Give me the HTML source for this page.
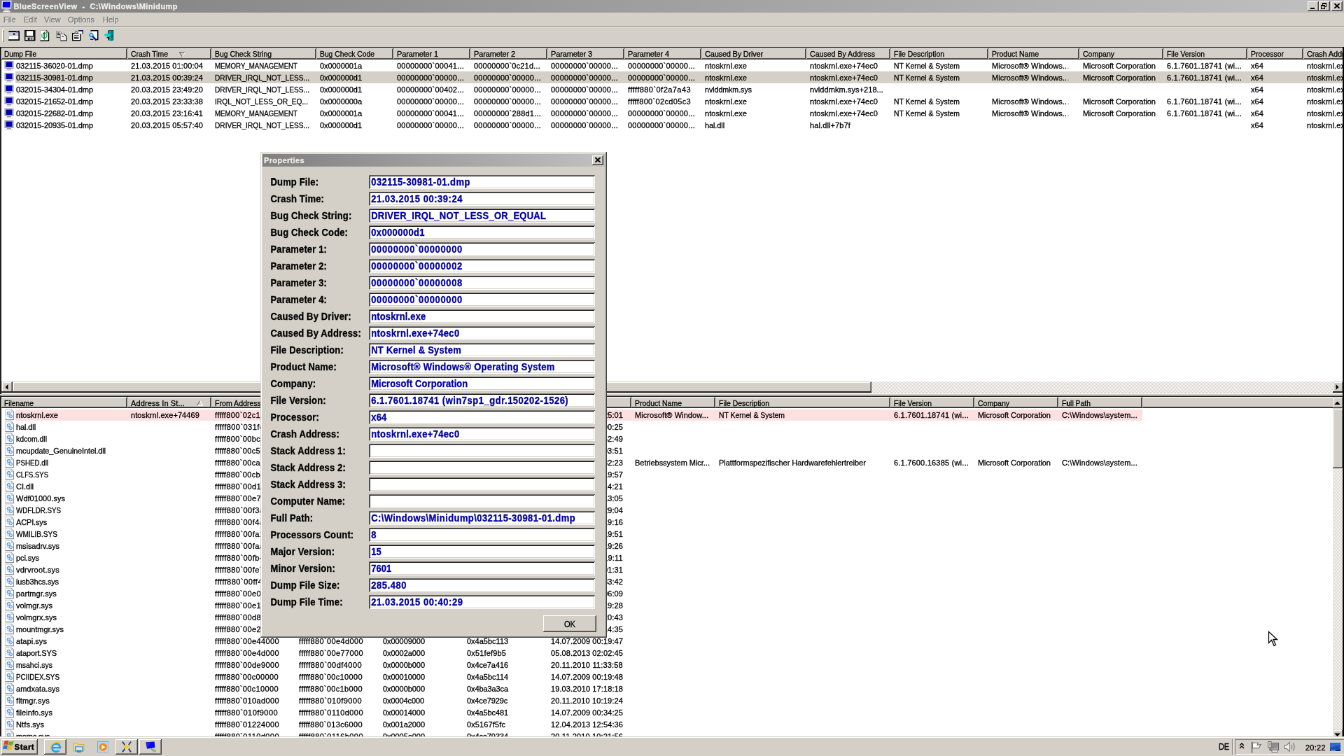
<!DOCTYPE html>
<html><head><meta charset="utf-8"><title>BlueScreenView</title>
<style>
html,body{margin:0;padding:0;background:#d4d0c8;overflow:hidden;width:1344px;height:756px}
#s{will-change:transform;position:absolute;left:0;top:0;width:1920px;height:1080px;transform:scale(.7);transform-origin:0 0;
 font-family:"Liberation Sans",sans-serif;font-size:11px;color:#000;background:#d4d0c8;overflow:hidden;line-height:13px;white-space:nowrap;-webkit-text-stroke:.3px}
#s div,#s span,#s svg{position:absolute;box-sizing:border-box}
.raised{box-shadow:inset -1px -1px #404040,inset 1px 1px #fff,inset -2px -2px #808080,inset 2px 2px #d4d0c8;background:#d4d0c8}
.raised2{box-shadow:inset -1px -1px #404040,inset 1px 1px #d4d0c8,inset -2px -2px #808080,inset 2px 2px #fff;background:#d4d0c8}
.sunken{box-shadow:inset 1px 1px #707070,inset -1px -1px #fff,inset 2px 2px #202020,inset -2px -2px #d4d0c8}
.lv{background:#fff;overflow:hidden}
.hd{background:#d4d0c8;height:16px;top:0;box-shadow:inset -1px -1px #282828,inset 1px 1px #fff,inset -2px -2px #585858;overflow:hidden}
.hd span{left:5px;top:1.8px}
.lo .hd span{top:2.8px}
.hd.f span{left:3.5px}
.row{left:0;height:17px;width:1916px}
.c{top:3px;height:14px}
.sb{background:repeating-conic-gradient(#fff 0 25%,#d4d0c8 0 50%) 0 0/2px 2px}
.btn{background:#d4d0c8;box-shadow:inset -1px -1px #404040,inset 1px 1px #fff,inset -2px -2px #808080}
.lab{left:14.5px;font-weight:bold;font-size:13px;letter-spacing:.15px;line-height:15px;transform:scaleY(1.1);transform-origin:0 35%}
.ed{left:155.4px;width:322.6px;height:20px;background:#fff;box-shadow:inset 1px 1px #707070,inset -1px -1px #fff,inset 2px 2px #181818,inset -2px -2px #d4d0c8}
.ed span{left:2.8px;top:2px;font-weight:bold;font-size:13px;line-height:15px;color:#0000a0;letter-spacing:.4px;transform:scaleY(1.1);transform-origin:0 35%}
</style></head>
<body>
<div id="s">
<div style="left:0;top:0;width:1920px;height:18px;background:linear-gradient(90deg,#808080,#c0c0c0)"></div>
<svg style="left:1px;top:0" width="17" height="18" viewBox="0 0 17 18"><path d="M1.5 1.2L15.6 .8L14.8 12.6L1 12.2Z" fill="#f0f0ff" stroke="#a8a8d0" stroke-width=".8"/><path d="M3 2.8L14 2.4L13.4 10.8L2.6 10.6Z" fill="#0000e0"/><path d="M5 13H12L11 15.5H6Z" fill="#b8bcc8"/><rect x="3.5" y="15.3" width="10" height="2.2" fill="#e8e8ec"/></svg>
<div style="left:19.5px;top:3px;font-weight:bold;color:#f0eee8;letter-spacing:.4px">BlueScreenView&nbsp; -&nbsp; C:\Windows\Minidump</div>
<div class="btn" style="left:1868px;top:2px;width:16px;height:14px"></div>
<div style="left:1872px;top:11px;width:6px;height:2px;background:#000"></div>
<div class="btn" style="left:1884px;top:2px;width:16px;height:14px"></div>
<div style="left:1889px;top:4px;width:6px;height:6px;border:1px solid #000;border-top-width:2px"></div>
<div style="left:1887px;top:7px;width:6px;height:6px;border:1px solid #000;border-top-width:2px;background:#d4d0c8"></div>
<div class="btn" style="left:1902px;top:2px;width:16px;height:14px"></div>
<svg style="left:1906px;top:5px" width="8" height="7" viewBox="0 0 8 7"><path d="M0 0L7 7M1 0L8 7M7 0L0 7M8 0L1 7" stroke="#000" stroke-width="1.25"/></svg>
<div style="left:5px;top:22px;color:#7c7c7c;text-shadow:1px 1px 0 rgba(255,255,255,.55)">File</div>
<div style="left:34px;top:22px;color:#7c7c7c;text-shadow:1px 1px 0 rgba(255,255,255,.55)">Edit</div>
<div style="left:63px;top:22px;color:#7c7c7c;text-shadow:1px 1px 0 rgba(255,255,255,.55)">View</div>
<div style="left:97px;top:22px;color:#7c7c7c;text-shadow:1px 1px 0 rgba(255,255,255,.55)">Options</div>
<div style="left:147px;top:22px;color:#7c7c7c;text-shadow:1px 1px 0 rgba(255,255,255,.55)">Help</div>
<div style="left:0;top:37px;width:1920px;height:1px;background:#808080"></div>
<div style="left:0;top:38px;width:1920px;height:1px;background:#fff"></div>
<div style="left:3px;top:41.5px;width:3px;height:18.5px;box-shadow:inset 1px 1px #fff,inset -1px -1px #808080"></div>
<svg style="left:11.5px;top:43px" width="16" height="16" viewBox="0 0 16 16"><rect x="0" y="1" width="15.5" height="13.5" fill="#fff"/><rect x="0" y="1" width="15" height="2.2" fill="#000078"/><rect x="1" y="3.2" width="13.5" height="5.3" fill="#c4c4cc"/><rect x="7" y="4.6" width="2.2" height="2.2" fill="#000"/><rect x="11" y="2.2" width="3" height="1.6" fill="#7080c8"/><path d="M0 1V14" stroke="#9a9a9a" stroke-width="1"/><path d="M15.2 1.5V15M0 14.2H16" stroke="#000" stroke-width="1.7"/></svg>
<svg style="left:34.5px;top:43px" width="16" height="16" viewBox="0 0 16 16"><rect x="0" y="0" width="15.5" height="15.5" fill="#000"/><rect x="3" y="1.2" width="9" height="7" fill="#fff"/><rect x="1.4" y="1.2" width="1.2" height="12.5" fill="#505050"/><rect x="12.6" y="1.2" width="1.4" height="12.5" fill="#505050"/><rect x="3" y="9.5" width="10" height="4.6" fill="#b0b0b0"/><rect x="5" y="10.6" width="2.4" height="3.5" fill="#202020"/><rect x="9" y="10.6" width="2" height="3.5" fill="#707070"/><rect x="1.5" y="10" width="1.5" height="4" fill="#e8e8e8"/></svg>
<svg style="left:57px;top:43px" width="16" height="16" viewBox="0 0 16 16"><path d="M.5 .5H9L12.5 4V15.3H.5Z" fill="#fff"/><path d="M.5 15V.5H9" fill="none" stroke="#b8b8b8"/><path d="M9 .5L12.5 4V15.2H.5" fill="none" stroke="#000" stroke-width="1.4"/><path d="M9 .5V4H12.5" fill="#d8d8d8" stroke="#404040" stroke-width=".8"/><path d="M6.3 2.2L3.6 6H5.4V9.2H7.2V6H9Z" fill="#008018"/><path d="M6.3 14L9 10.2H7.2V7H5.4V10.2H3.6Z" fill="#009828"/><path d="M3.2 5.5Q2 8 3.4 10.6M9.4 5.5Q10.6 8 9.2 10.6" stroke="#30a0a0" stroke-width="1.3" fill="none"/></svg>
<svg style="left:80px;top:43px" width="16" height="16" viewBox="0 0 16 16"><path d="M.5 1.5H5.5L8 4V10.5H.5Z" fill="#d8d8d8" stroke="#8a8a8a"/><path d="M8 4.5V10.5H1" stroke="#484848" stroke-width="1.3" fill="none"/><path d="M2 4.2H5M2 6.5H6" stroke="#282828" stroke-width="1.6"/><path d="M6.5 5.5H11.5L15 9V15.2H6.5Z" fill="#ececec" stroke="#909090"/><path d="M11.5 5.5L15 9V15.2H6.5" stroke="#404040" stroke-width="1.4" fill="none"/><path d="M8.5 9.3H11" stroke="#505050" stroke-width="1.4"/></svg>
<svg style="left:103px;top:43px" width="16" height="16" viewBox="0 0 16 16"><rect x=".7" y="4.7" width="11" height="10" fill="#fff" stroke="#000" stroke-width="1.4"/><path d="M3 8H9.5" stroke="#000" stroke-width="1.2"/><path d="M3 11.2H9.5" stroke="#000" stroke-width="2"/><path d="M5.5 9.6H9.5" stroke="#fff" stroke-width="1.2"/><rect x="9" y=".8" width="6.4" height="4.4" fill="#fff"/><path d="M9 .9H15.4V5.4" stroke="#101080" stroke-width="1.6" fill="none"/><path d="M3.5 4.5L6 1.4L8.5 4.2" stroke="#707070" stroke-width="1.3" fill="#e0e0e0"/></svg>
<svg style="left:127px;top:43px" width="16" height="16" viewBox="0 0 16 16"><path d="M2.5 .7H12.5V13.5H4V.7Z" fill="#fff"/><path d="M2.5 .7H12.7V13.4H9" fill="none" stroke="#000" stroke-width="1.5"/><path d="M2 13.2H6.5" stroke="#000" stroke-width="1.3"/><circle cx="3.4" cy="7" r="2.6" fill="#50d8f0" stroke="#2888d8" stroke-width="1.3"/><circle cx="3.2" cy="6.6" r=".9" fill="#d8f8ff"/><path d="M5.4 9.2L10.6 14.4" stroke="#001890" stroke-width="2.4"/></svg>
<svg style="left:149px;top:43px" width="16" height="16" viewBox="0 0 16 16"><path d="M6.2 .4H13.2V14.6L9.6 15.6L6.2 14.4Z" fill="#00a8a8"/><path d="M9.8 .4H13.2V14.6L9.8 15.6Z" fill="#007c80"/><path d="M6.2 .5V5M6.2 10V14.4" stroke="#000" stroke-width="1.3"/><path d="M3.6 10.5H6.4V12.6" stroke="#000" stroke-width="1.5" fill="none"/><circle cx="11" cy="8.2" r=".9" fill="#000"/><path d="M.2 5.2H4.6V3L8.8 7L4.6 10.6V8.6H.2Z" fill="#08d4dc"/><path d="M6 .5H13.4" stroke="#003c40" stroke-width=".8"/></svg>
<div class="lv" style="left:0;top:67px;width:1920px;height:496px">
<div class="hd f" style="left:2px;top:2px;width:180px"><span style="transform:scaleX(0.918);transform-origin:0 0;">Dump File</span></div>
<div class="hd" style="left:182px;top:2px;width:120px"><span style="transform:scaleX(0.942);transform-origin:0 0;">Crash Time</span></div>
<div class="hd" style="left:302px;top:2px;width:150px"><span style="transform:scaleX(0.946);transform-origin:0 0;">Bug Check String</span></div>
<div class="hd" style="left:452px;top:2px;width:110px"><span style="transform:scaleX(0.938);transform-origin:0 0;">Bug Check Code</span></div>
<div class="hd" style="left:562px;top:2px;width:110px"><span style="letter-spacing:-0.14px;">Parameter 1</span></div>
<div class="hd" style="left:672px;top:2px;width:110px"><span style="letter-spacing:-0.14px;">Parameter 2</span></div>
<div class="hd" style="left:782px;top:2px;width:110px"><span style="letter-spacing:-0.14px;">Parameter 3</span></div>
<div class="hd" style="left:892px;top:2px;width:110px"><span style="letter-spacing:-0.14px;">Parameter 4</span></div>
<div class="hd" style="left:1002px;top:2px;width:150px"><span style="letter-spacing:-0.2px;">Caused By Driver</span></div>
<div class="hd" style="left:1152px;top:2px;width:120px"><span style="transform:scaleX(0.962);transform-origin:0 0;">Caused By Address</span></div>
<div class="hd" style="left:1272px;top:2px;width:140px"><span style="transform:scaleX(0.950);transform-origin:0 0;">File Description</span></div>
<div class="hd" style="left:1412px;top:2px;width:130px"><span style="transform:scaleX(0.953);transform-origin:0 0;">Product Name</span></div>
<div class="hd" style="left:1542px;top:2px;width:120px"><span style="transform:scaleX(0.956);transform-origin:0 0;">Company</span></div>
<div class="hd" style="left:1662px;top:2px;width:120px"><span style="transform:scaleX(0.939);transform-origin:0 0;">File Version</span></div>
<div class="hd" style="left:1782px;top:2px;width:80px"><span style="transform:scaleX(0.949);transform-origin:0 0;">Processor</span></div>
<div class="hd" style="left:1862px;top:2px;width:120px"><span style="letter-spacing:-0.17px;">Crash Address</span></div>
<svg style="left:256px;top:7px" width="9" height="8" viewBox="0 0 9 8"><path d="M.5 .5H8.5L4.5 7.5Z" fill="none" stroke="#707070" stroke-width="1.3"/><path d="M8.5 .5L4.5 7.5" stroke="#fff" stroke-width="1.3" fill="none"/></svg>
<div class="row" style="top:18px">
<svg style="left:4px;top:1px" width="16" height="16" viewBox="0 0 16 16"><rect x="3" y="1.5" width="12" height="10" fill="#c8c8d8" stroke="#9090a8"/><rect x="4.5" y="2.5" width="9" height="7.5" fill="#0000b4"/><rect x="6" y="12" width="6" height="1.5" fill="#a0a0a0"/><rect x="4" y="13.5" width="10" height="1.5" fill="#d8d8d8"/></svg>
<span class="c" style="left:23px;letter-spacing:-0.03px;">032115-36020-01.dmp</span>
<span class="c" style="left:187px;letter-spacing:0.11px;">21.03.2015 01:00:04</span>
<span class="c" style="left:307px;transform:scaleX(0.879);transform-origin:0 0;">MEMORY_MANAGEMENT</span>
<span class="c" style="left:457px;letter-spacing:-0.06px;">0x0000001a</span>
<span class="c" style="left:567px;letter-spacing:0.21px;">00000000`00041...</span>
<span class="c" style="left:677px;letter-spacing:0.19px;">00000000`0c21d...</span>
<span class="c" style="left:787px;letter-spacing:0.21px;">00000000`00000...</span>
<span class="c" style="left:897px;letter-spacing:0.21px;">00000000`00000...</span>
<span class="c" style="left:1007px;letter-spacing:0.06px;">ntoskrnl.exe</span>
<span class="c" style="left:1157px;letter-spacing:0.07px;">ntoskrnl.exe+74ec0</span>
<span class="c" style="left:1277px;transform:scaleX(0.945);transform-origin:0 0;">NT Kernel &amp; System</span>
<span class="c" style="left:1417px;letter-spacing:0.02px;">Microsoft® Windows...</span>
<span class="c" style="left:1547px;letter-spacing:-0.06px;">Microsoft Corporation</span>
<span class="c" style="left:1667px;letter-spacing:0.2px;">6.1.7601.18741 (wi...</span>
<span class="c" style="left:1787px;letter-spacing:0.08px;">x64</span>
<span class="c" style="left:1867px;letter-spacing:0.07px;">ntoskrnl.exe+74ec0</span>
</div>
<div class="row" style="top:35px">
<div style="left:22px;top:0;width:1900px;height:17px;background:#d4d0c8"></div>
<svg style="left:4px;top:1px" width="16" height="16" viewBox="0 0 16 16"><rect x="3" y="1.5" width="12" height="10" fill="#c8c8d8" stroke="#9090a8"/><rect x="4.5" y="2.5" width="9" height="7.5" fill="#0000b4"/><rect x="6" y="12" width="6" height="1.5" fill="#a0a0a0"/><rect x="4" y="13.5" width="10" height="1.5" fill="#d8d8d8"/></svg>
<span class="c" style="left:23px;letter-spacing:-0.03px;">032115-30981-01.dmp</span>
<span class="c" style="left:187px;letter-spacing:0.11px;">21.03.2015 00:39:24</span>
<span class="c" style="left:307px;transform:scaleX(0.924);transform-origin:0 0;">DRIVER_IRQL_NOT_LESS...</span>
<span class="c" style="left:457px;letter-spacing:-0.06px;">0x000000d1</span>
<span class="c" style="left:567px;letter-spacing:0.21px;">00000000`00000...</span>
<span class="c" style="left:677px;letter-spacing:0.21px;">00000000`00000...</span>
<span class="c" style="left:787px;letter-spacing:0.21px;">00000000`00000...</span>
<span class="c" style="left:897px;letter-spacing:0.21px;">00000000`00000...</span>
<span class="c" style="left:1007px;letter-spacing:0.06px;">ntoskrnl.exe</span>
<span class="c" style="left:1157px;letter-spacing:0.07px;">ntoskrnl.exe+74ec0</span>
<span class="c" style="left:1277px;transform:scaleX(0.945);transform-origin:0 0;">NT Kernel &amp; System</span>
<span class="c" style="left:1417px;letter-spacing:0.02px;">Microsoft® Windows...</span>
<span class="c" style="left:1547px;letter-spacing:-0.06px;">Microsoft Corporation</span>
<span class="c" style="left:1667px;letter-spacing:0.2px;">6.1.7601.18741 (wi...</span>
<span class="c" style="left:1787px;letter-spacing:0.08px;">x64</span>
<span class="c" style="left:1867px;letter-spacing:0.07px;">ntoskrnl.exe+74ec0</span>
</div>
<div class="row" style="top:52px">
<svg style="left:4px;top:1px" width="16" height="16" viewBox="0 0 16 16"><rect x="3" y="1.5" width="12" height="10" fill="#c8c8d8" stroke="#9090a8"/><rect x="4.5" y="2.5" width="9" height="7.5" fill="#0000b4"/><rect x="6" y="12" width="6" height="1.5" fill="#a0a0a0"/><rect x="4" y="13.5" width="10" height="1.5" fill="#d8d8d8"/></svg>
<span class="c" style="left:23px;letter-spacing:-0.07px;">032015-34304-01.dmp</span>
<span class="c" style="left:187px;letter-spacing:0.11px;">20.03.2015 23:49:20</span>
<span class="c" style="left:307px;transform:scaleX(0.924);transform-origin:0 0;">DRIVER_IRQL_NOT_LESS...</span>
<span class="c" style="left:457px;letter-spacing:-0.06px;">0x000000d1</span>
<span class="c" style="left:567px;letter-spacing:0.21px;">00000000`00402...</span>
<span class="c" style="left:677px;letter-spacing:0.21px;">00000000`00000...</span>
<span class="c" style="left:787px;letter-spacing:0.21px;">00000000`00000...</span>
<span class="c" style="left:897px;letter-spacing:0.45px;">fffff880`0f2a7a43</span>
<span class="c" style="left:1007px;transform:scaleX(0.961);transform-origin:0 0;">nvlddmkm.sys</span>
<span class="c" style="left:1157px;letter-spacing:0.07px;">nvlddmkm.sys+218...</span>
<span class="c" style="left:1787px;letter-spacing:0.08px;">x64</span>
<span class="c" style="left:1867px;letter-spacing:0.07px;">ntoskrnl.exe+74ec0</span>
</div>
<div class="row" style="top:69px">
<svg style="left:4px;top:1px" width="16" height="16" viewBox="0 0 16 16"><rect x="3" y="1.5" width="12" height="10" fill="#c8c8d8" stroke="#9090a8"/><rect x="4.5" y="2.5" width="9" height="7.5" fill="#0000b4"/><rect x="6" y="12" width="6" height="1.5" fill="#a0a0a0"/><rect x="4" y="13.5" width="10" height="1.5" fill="#d8d8d8"/></svg>
<span class="c" style="left:23px;letter-spacing:-0.07px;">032015-21652-01.dmp</span>
<span class="c" style="left:187px;letter-spacing:0.11px;">20.03.2015 23:33:38</span>
<span class="c" style="left:307px;transform:scaleX(0.930);transform-origin:0 0;">IRQL_NOT_LESS_OR_EQ...</span>
<span class="c" style="left:457px;letter-spacing:-0.06px;">0x0000000a</span>
<span class="c" style="left:567px;letter-spacing:0.21px;">00000000`00000...</span>
<span class="c" style="left:677px;letter-spacing:0.21px;">00000000`00000...</span>
<span class="c" style="left:787px;letter-spacing:0.21px;">00000000`00000...</span>
<span class="c" style="left:897px;letter-spacing:0.34px;">fffff800`02cd05c3</span>
<span class="c" style="left:1007px;letter-spacing:0.06px;">ntoskrnl.exe</span>
<span class="c" style="left:1157px;letter-spacing:0.07px;">ntoskrnl.exe+74ec0</span>
<span class="c" style="left:1277px;transform:scaleX(0.945);transform-origin:0 0;">NT Kernel &amp; System</span>
<span class="c" style="left:1417px;letter-spacing:0.02px;">Microsoft® Windows...</span>
<span class="c" style="left:1547px;letter-spacing:-0.06px;">Microsoft Corporation</span>
<span class="c" style="left:1667px;letter-spacing:0.2px;">6.1.7601.18741 (wi...</span>
<span class="c" style="left:1787px;letter-spacing:0.08px;">x64</span>
<span class="c" style="left:1867px;letter-spacing:0.07px;">ntoskrnl.exe+74ec0</span>
</div>
<div class="row" style="top:86px">
<svg style="left:4px;top:1px" width="16" height="16" viewBox="0 0 16 16"><rect x="3" y="1.5" width="12" height="10" fill="#c8c8d8" stroke="#9090a8"/><rect x="4.5" y="2.5" width="9" height="7.5" fill="#0000b4"/><rect x="6" y="12" width="6" height="1.5" fill="#a0a0a0"/><rect x="4" y="13.5" width="10" height="1.5" fill="#d8d8d8"/></svg>
<span class="c" style="left:23px;letter-spacing:-0.07px;">032015-22682-01.dmp</span>
<span class="c" style="left:187px;letter-spacing:0.11px;">20.03.2015 23:16:41</span>
<span class="c" style="left:307px;transform:scaleX(0.879);transform-origin:0 0;">MEMORY_MANAGEMENT</span>
<span class="c" style="left:457px;letter-spacing:-0.06px;">0x0000001a</span>
<span class="c" style="left:567px;letter-spacing:0.21px;">00000000`00041...</span>
<span class="c" style="left:677px;letter-spacing:0.21px;">00000000`288d1...</span>
<span class="c" style="left:787px;letter-spacing:0.21px;">00000000`00000...</span>
<span class="c" style="left:897px;letter-spacing:0.21px;">00000000`00000...</span>
<span class="c" style="left:1007px;letter-spacing:0.06px;">ntoskrnl.exe</span>
<span class="c" style="left:1157px;letter-spacing:0.07px;">ntoskrnl.exe+74ec0</span>
<span class="c" style="left:1277px;transform:scaleX(0.945);transform-origin:0 0;">NT Kernel &amp; System</span>
<span class="c" style="left:1417px;letter-spacing:0.02px;">Microsoft® Windows...</span>
<span class="c" style="left:1547px;letter-spacing:-0.06px;">Microsoft Corporation</span>
<span class="c" style="left:1667px;letter-spacing:0.2px;">6.1.7601.18741 (wi...</span>
<span class="c" style="left:1787px;letter-spacing:0.08px;">x64</span>
<span class="c" style="left:1867px;letter-spacing:0.07px;">ntoskrnl.exe+74ec0</span>
</div>
<div class="row" style="top:103px">
<svg style="left:4px;top:1px" width="16" height="16" viewBox="0 0 16 16"><rect x="3" y="1.5" width="12" height="10" fill="#c8c8d8" stroke="#9090a8"/><rect x="4.5" y="2.5" width="9" height="7.5" fill="#0000b4"/><rect x="6" y="12" width="6" height="1.5" fill="#a0a0a0"/><rect x="4" y="13.5" width="10" height="1.5" fill="#d8d8d8"/></svg>
<span class="c" style="left:23px;letter-spacing:-0.07px;">032015-20935-01.dmp</span>
<span class="c" style="left:187px;letter-spacing:0.11px;">20.03.2015 05:57:40</span>
<span class="c" style="left:307px;transform:scaleX(0.924);transform-origin:0 0;">DRIVER_IRQL_NOT_LESS...</span>
<span class="c" style="left:457px;letter-spacing:-0.06px;">0x000000d1</span>
<span class="c" style="left:567px;letter-spacing:0.21px;">00000000`00000...</span>
<span class="c" style="left:677px;letter-spacing:0.21px;">00000000`00000...</span>
<span class="c" style="left:787px;letter-spacing:0.21px;">00000000`00000...</span>
<span class="c" style="left:897px;letter-spacing:0.21px;">00000000`00000...</span>
<span class="c" style="left:1007px;letter-spacing:-0.11px;">hal.dll</span>
<span class="c" style="left:1157px;letter-spacing:0.12px;">hal.dll+7b7f</span>
<span class="c" style="left:1787px;letter-spacing:0.08px;">x64</span>
<span class="c" style="left:1867px;letter-spacing:0.07px;">ntoskrnl.exe+74ec0</span>
</div>
<div class="sb" style="left:2px;top:478px;width:1916px;height:16px"></div>
<div class="raised2" style="left:2px;top:478px;width:16px;height:16px"></div>
<svg style="left:7px;top:482px" width="5" height="8" viewBox="0 0 5 8"><path d="M4.5 0V8L.5 4Z" fill="#000"/></svg>
<div class="raised2" style="left:18px;top:478px;width:1227px;height:16px"></div>
<div class="raised2" style="left:1904.2px;top:478px;width:14.5px;height:16px"></div>
<svg style="left:1908px;top:482px" width="5" height="8" viewBox="0 0 5 8"><path d="M.5 0V8L4.5 4Z" fill="#000"/></svg>
<div style="left:2px;top:492.3px;width:1243px;height:2px;background:#282828"></div>
<div style="left:1904.2px;top:492.3px;width:14.5px;height:2px;background:#282828"></div>
<div class="sunken" style="left:0;top:0;width:1920px;height:496px;pointer-events:none"></div>
<div style="left:0;top:0;width:1.6px;height:496px;background:#202020"></div>
</div>
<div class="lv lo" style="left:0;top:565px;width:1920px;height:515px">
<div class="hd f" style="left:2px;top:2px;width:180px"><span style="transform:scaleX(0.928);transform-origin:0 0;">Filename</span></div>
<div class="hd" style="left:182px;top:2px;width:120px"><span style="letter-spacing:0.11px;">Address In St...</span></div>
<div class="hd" style="left:302px;top:2px;width:120px"><span style="transform:scaleX(0.964);transform-origin:0 0;">From Address</span></div>
<div class="hd" style="left:422px;top:2px;width:120px"><span style="letter-spacing:-0.04px;">To Address</span></div>
<div class="hd" style="left:542px;top:2px;width:120px"><span style="transform:scaleX(0.888);transform-origin:0 0;">Size</span></div>
<div class="hd" style="left:662px;top:2px;width:120px"><span style="transform:scaleX(0.934);transform-origin:0 0;">Time Stamp</span></div>
<div class="hd" style="left:782px;top:2px;width:120px"><span style="transform:scaleX(0.949);transform-origin:0 0;">Time String</span></div>
<div class="hd" style="left:902px;top:2px;width:120px"><span style="transform:scaleX(0.953);transform-origin:0 0;">Product Name</span></div>
<div class="hd" style="left:1022px;top:2px;width:250px"><span style="transform:scaleX(0.950);transform-origin:0 0;">File Description</span></div>
<div class="hd" style="left:1272px;top:2px;width:120px"><span style="transform:scaleX(0.939);transform-origin:0 0;">File Version</span></div>
<div class="hd" style="left:1392px;top:2px;width:120px"><span style="transform:scaleX(0.956);transform-origin:0 0;">Company</span></div>
<div class="hd" style="left:1512px;top:2px;width:120px"><span style="transform:scaleX(0.944);transform-origin:0 0;">Full Path</span></div>
<div class="hd" style="left:1632px;top:2px;width:290px"></div>
<svg style="left:281px;top:7px" width="9" height="8" viewBox="0 0 9 8"><path d="M.5 7.5H8.5L4.5 .5Z" fill="none" stroke="#fff" stroke-width="1.3"/><path d="M.5 7.5L4.5 .5" stroke="#707070" stroke-width="1.3" fill="none"/></svg>
<div class="row" style="top:19px">
<div style="left:22px;top:1.4px;width:1610px;height:15.4px;background:#ffe0e0"></div>
<svg style="left:4px;top:0" width="16" height="17" viewBox="0 0 16 17"><path d="M3.8 1.2H12L15.4 4.6V15.6H3.8Z" fill="#fff"/><path d="M3.8 15.6V1.2H12" fill="none" stroke="#c0c4cc"/><path d="M12 1.2L15.4 4.6V15.6H3.4" fill="none" stroke="#8c9098" stroke-width="1.2"/><path d="M12 1.4V4.6H15.2" fill="#eceef2" stroke="#a8acb4" stroke-width=".8"/><circle cx="8.4" cy="6.6" r="2.3" fill="#c4dcf4" stroke="#4c84c4" stroke-width="1"/><circle cx="11.4" cy="10.8" r="2.1" fill="#cce0f6" stroke="#5c94d0" stroke-width="1"/><path d="M6.2 9.6L8.6 12.4" stroke="#6c9cd0" stroke-width="1"/></svg>
<span class="c" style="left:23px;letter-spacing:0.06px;">ntoskrnl.exe</span>
<span class="c" style="left:187px;letter-spacing:0.09px;">ntoskrnl.exe+74469</span>
<span class="c" style="left:307px;letter-spacing:0.36px;">fffff800`02c19000</span>
<span class="c" style="left:427px;letter-spacing:0.45px;">fffff800`031fe000</span>
<span class="c" style="left:547px;letter-spacing:-0.06px;">0x005e5000</span>
<span class="c" style="left:667px;letter-spacing:-0.06px;">0x54d0317d</span>
<span class="c" style="left:787px;letter-spacing:0.11px;">03.02.2015 03:25:01</span>
<span class="c" style="left:907px;letter-spacing:0.08px;">Microsoft® Window...</span>
<span class="c" style="left:1027px;transform:scaleX(0.945);transform-origin:0 0;">NT Kernel &amp; System</span>
<span class="c" style="left:1277px;letter-spacing:0.2px;">6.1.7601.18741 (wi...</span>
<span class="c" style="left:1397px;letter-spacing:-0.06px;">Microsoft Corporation</span>
<span class="c" style="left:1517px;letter-spacing:0.11px;">C:\Windows\system...</span>
</div>
<div class="row" style="top:36px">
<svg style="left:4px;top:0" width="16" height="17" viewBox="0 0 16 17"><path d="M3.8 1.2H12L15.4 4.6V15.6H3.8Z" fill="#fff"/><path d="M3.8 15.6V1.2H12" fill="none" stroke="#c0c4cc"/><path d="M12 1.2L15.4 4.6V15.6H3.4" fill="none" stroke="#8c9098" stroke-width="1.2"/><path d="M12 1.4V4.6H15.2" fill="#eceef2" stroke="#a8acb4" stroke-width=".8"/><circle cx="8.4" cy="6.6" r="2.3" fill="#c4dcf4" stroke="#4c84c4" stroke-width="1"/><circle cx="11.4" cy="10.8" r="2.1" fill="#cce0f6" stroke="#5c94d0" stroke-width="1"/><path d="M6.2 9.6L8.6 12.4" stroke="#6c9cd0" stroke-width="1"/></svg>
<span class="c" style="left:23px;letter-spacing:-0.11px;">hal.dll</span>
<span class="c" style="left:307px;letter-spacing:0.45px;">fffff800`031fe000</span>
<span class="c" style="left:427px;letter-spacing:0.39px;">fffff800`03247000</span>
<span class="c" style="left:547px;letter-spacing:-0.06px;">0x00049000</span>
<span class="c" style="left:667px;letter-spacing:-0.13px;">0x4ce7c669</span>
<span class="c" style="left:787px;letter-spacing:0.15px;">20.11.2010 14:00:25</span>
</div>
<div class="row" style="top:53px">
<svg style="left:4px;top:0" width="16" height="17" viewBox="0 0 16 17"><path d="M3.8 1.2H12L15.4 4.6V15.6H3.8Z" fill="#fff"/><path d="M3.8 15.6V1.2H12" fill="none" stroke="#c0c4cc"/><path d="M12 1.2L15.4 4.6V15.6H3.4" fill="none" stroke="#8c9098" stroke-width="1.2"/><path d="M12 1.4V4.6H15.2" fill="#eceef2" stroke="#a8acb4" stroke-width=".8"/><circle cx="8.4" cy="6.6" r="2.3" fill="#c4dcf4" stroke="#4c84c4" stroke-width="1"/><circle cx="11.4" cy="10.8" r="2.1" fill="#cce0f6" stroke="#5c94d0" stroke-width="1"/><path d="M6.2 9.6L8.6 12.4" stroke="#6c9cd0" stroke-width="1"/></svg>
<span class="c" style="left:23px;transform:scaleX(0.947);transform-origin:0 0;">kdcom.dll</span>
<span class="c" style="left:307px;letter-spacing:0.36px;">fffff800`00bcd000</span>
<span class="c" style="left:427px;letter-spacing:0.39px;">fffff800`00bd7000</span>
<span class="c" style="left:547px;letter-spacing:-0.06px;">0x0000a000</span>
<span class="c" style="left:667px;letter-spacing:-0.06px;">0x4d4d8061</span>
<span class="c" style="left:787px;letter-spacing:0.15px;">05.02.2011 17:52:49</span>
</div>
<div class="row" style="top:70px">
<svg style="left:4px;top:0" width="16" height="17" viewBox="0 0 16 17"><path d="M3.8 1.2H12L15.4 4.6V15.6H3.8Z" fill="#fff"/><path d="M3.8 15.6V1.2H12" fill="none" stroke="#c0c4cc"/><path d="M12 1.2L15.4 4.6V15.6H3.4" fill="none" stroke="#8c9098" stroke-width="1.2"/><path d="M12 1.4V4.6H15.2" fill="#eceef2" stroke="#a8acb4" stroke-width=".8"/><circle cx="8.4" cy="6.6" r="2.3" fill="#c4dcf4" stroke="#4c84c4" stroke-width="1"/><circle cx="11.4" cy="10.8" r="2.1" fill="#cce0f6" stroke="#5c94d0" stroke-width="1"/><path d="M6.2 9.6L8.6 12.4" stroke="#6c9cd0" stroke-width="1"/></svg>
<span class="c" style="left:23px;letter-spacing:-0.12px;">mcupdate_GenuineIntel.dll</span>
<span class="c" style="left:307px;letter-spacing:0.36px;">fffff880`00c57000</span>
<span class="c" style="left:427px;letter-spacing:0.36px;">fffff880`00ca6000</span>
<span class="c" style="left:547px;letter-spacing:0.05px;">0x0004f000</span>
<span class="c" style="left:667px;letter-spacing:-0.13px;">0x4ce7c737</span>
<span class="c" style="left:787px;letter-spacing:0.15px;">20.11.2010 14:03:51</span>
</div>
<div class="row" style="top:87px">
<svg style="left:4px;top:0" width="16" height="17" viewBox="0 0 16 17"><path d="M3.8 1.2H12L15.4 4.6V15.6H3.8Z" fill="#fff"/><path d="M3.8 15.6V1.2H12" fill="none" stroke="#c0c4cc"/><path d="M12 1.2L15.4 4.6V15.6H3.4" fill="none" stroke="#8c9098" stroke-width="1.2"/><path d="M12 1.4V4.6H15.2" fill="#eceef2" stroke="#a8acb4" stroke-width=".8"/><circle cx="8.4" cy="6.6" r="2.3" fill="#c4dcf4" stroke="#4c84c4" stroke-width="1"/><circle cx="11.4" cy="10.8" r="2.1" fill="#cce0f6" stroke="#5c94d0" stroke-width="1"/><path d="M6.2 9.6L8.6 12.4" stroke="#6c9cd0" stroke-width="1"/></svg>
<span class="c" style="left:23px;transform:scaleX(0.885);transform-origin:0 0;">PSHED.dll</span>
<span class="c" style="left:307px;letter-spacing:0.36px;">fffff880`00ca6000</span>
<span class="c" style="left:427px;letter-spacing:0.36px;">fffff880`00cba000</span>
<span class="c" style="left:547px;letter-spacing:-0.06px;">0x00014000</span>
<span class="c" style="left:667px;letter-spacing:-0.06px;">0x4a5be027</span>
<span class="c" style="left:787px;letter-spacing:0.11px;">14.07.2009 02:32:23</span>
<span class="c" style="left:907px;letter-spacing:-0.03px;">Betriebssystem Micr...</span>
<span class="c" style="left:1027px;letter-spacing:-0.04px;">Plattformspezifischer Hardwarefehlertreiber</span>
<span class="c" style="left:1277px;letter-spacing:0.2px;">6.1.7600.16385 (wi...</span>
<span class="c" style="left:1397px;letter-spacing:-0.06px;">Microsoft Corporation</span>
<span class="c" style="left:1517px;letter-spacing:0.11px;">C:\Windows\system...</span>
</div>
<div class="row" style="top:104px">
<svg style="left:4px;top:0" width="16" height="17" viewBox="0 0 16 17"><path d="M3.8 1.2H12L15.4 4.6V15.6H3.8Z" fill="#fff"/><path d="M3.8 15.6V1.2H12" fill="none" stroke="#c0c4cc"/><path d="M12 1.2L15.4 4.6V15.6H3.4" fill="none" stroke="#8c9098" stroke-width="1.2"/><path d="M12 1.4V4.6H15.2" fill="#eceef2" stroke="#a8acb4" stroke-width=".8"/><circle cx="8.4" cy="6.6" r="2.3" fill="#c4dcf4" stroke="#4c84c4" stroke-width="1"/><circle cx="11.4" cy="10.8" r="2.1" fill="#cce0f6" stroke="#5c94d0" stroke-width="1"/><path d="M6.2 9.6L8.6 12.4" stroke="#6c9cd0" stroke-width="1"/></svg>
<span class="c" style="left:23px;transform:scaleX(0.865);transform-origin:0 0;">CLFS.SYS</span>
<span class="c" style="left:307px;letter-spacing:0.36px;">fffff880`00cba000</span>
<span class="c" style="left:427px;letter-spacing:0.39px;">fffff880`00d18000</span>
<span class="c" style="left:547px;letter-spacing:-0.06px;">0x0005e000</span>
<span class="c" style="left:667px;">0x4a5bc11d</span>
<span class="c" style="left:787px;letter-spacing:0.11px;">14.07.2009 00:19:57</span>
</div>
<div class="row" style="top:121px">
<svg style="left:4px;top:0" width="16" height="17" viewBox="0 0 16 17"><path d="M3.8 1.2H12L15.4 4.6V15.6H3.8Z" fill="#fff"/><path d="M3.8 15.6V1.2H12" fill="none" stroke="#c0c4cc"/><path d="M12 1.2L15.4 4.6V15.6H3.4" fill="none" stroke="#8c9098" stroke-width="1.2"/><path d="M12 1.4V4.6H15.2" fill="#eceef2" stroke="#a8acb4" stroke-width=".8"/><circle cx="8.4" cy="6.6" r="2.3" fill="#c4dcf4" stroke="#4c84c4" stroke-width="1"/><circle cx="11.4" cy="10.8" r="2.1" fill="#cce0f6" stroke="#5c94d0" stroke-width="1"/><path d="M6.2 9.6L8.6 12.4" stroke="#6c9cd0" stroke-width="1"/></svg>
<span class="c" style="left:23px;">CI.dll</span>
<span class="c" style="left:307px;letter-spacing:0.39px;">fffff880`00d18000</span>
<span class="c" style="left:427px;letter-spacing:0.39px;">fffff880`00dd8000</span>
<span class="c" style="left:547px;letter-spacing:-0.1px;">0x000c0000</span>
<span class="c" style="left:667px;letter-spacing:-0.13px;">0x4ce7c944</span>
<span class="c" style="left:787px;letter-spacing:0.15px;">20.11.2010 14:14:21</span>
</div>
<div class="row" style="top:138px">
<svg style="left:4px;top:0" width="16" height="17" viewBox="0 0 16 17"><path d="M3.8 1.2H12L15.4 4.6V15.6H3.8Z" fill="#fff"/><path d="M3.8 15.6V1.2H12" fill="none" stroke="#c0c4cc"/><path d="M12 1.2L15.4 4.6V15.6H3.4" fill="none" stroke="#8c9098" stroke-width="1.2"/><path d="M12 1.4V4.6H15.2" fill="#eceef2" stroke="#a8acb4" stroke-width=".8"/><circle cx="8.4" cy="6.6" r="2.3" fill="#c4dcf4" stroke="#4c84c4" stroke-width="1"/><circle cx="11.4" cy="10.8" r="2.1" fill="#cce0f6" stroke="#5c94d0" stroke-width="1"/><path d="M6.2 9.6L8.6 12.4" stroke="#6c9cd0" stroke-width="1"/></svg>
<span class="c" style="left:23px;letter-spacing:0.02px;">Wdf01000.sys</span>
<span class="c" style="left:307px;letter-spacing:0.39px;">fffff880`00e78000</span>
<span class="c" style="left:427px;letter-spacing:0.45px;">fffff880`00f3a000</span>
<span class="c" style="left:547px;letter-spacing:-0.1px;">0x000c2000</span>
<span class="c" style="left:667px;letter-spacing:-0.1px;">0x51c51641</span>
<span class="c" style="left:787px;letter-spacing:0.11px;">22.06.2013 04:13:05</span>
</div>
<div class="row" style="top:155px">
<svg style="left:4px;top:0" width="16" height="17" viewBox="0 0 16 17"><path d="M3.8 1.2H12L15.4 4.6V15.6H3.8Z" fill="#fff"/><path d="M3.8 15.6V1.2H12" fill="none" stroke="#c0c4cc"/><path d="M12 1.2L15.4 4.6V15.6H3.4" fill="none" stroke="#8c9098" stroke-width="1.2"/><path d="M12 1.4V4.6H15.2" fill="#eceef2" stroke="#a8acb4" stroke-width=".8"/><circle cx="8.4" cy="6.6" r="2.3" fill="#c4dcf4" stroke="#4c84c4" stroke-width="1"/><circle cx="11.4" cy="10.8" r="2.1" fill="#cce0f6" stroke="#5c94d0" stroke-width="1"/><path d="M6.2 9.6L8.6 12.4" stroke="#6c9cd0" stroke-width="1"/></svg>
<span class="c" style="left:23px;transform:scaleX(0.887);transform-origin:0 0;">WDFLDR.SYS</span>
<span class="c" style="left:307px;letter-spacing:0.45px;">fffff880`00f3a000</span>
<span class="c" style="left:427px;letter-spacing:0.45px;">fffff880`00f4a000</span>
<span class="c" style="left:547px;letter-spacing:-0.06px;">0x00010000</span>
<span class="c" style="left:667px;letter-spacing:-0.06px;">0x5010ab70</span>
<span class="c" style="left:787px;letter-spacing:0.11px;">26.07.2012 03:29:04</span>
</div>
<div class="row" style="top:172px">
<svg style="left:4px;top:0" width="16" height="17" viewBox="0 0 16 17"><path d="M3.8 1.2H12L15.4 4.6V15.6H3.8Z" fill="#fff"/><path d="M3.8 15.6V1.2H12" fill="none" stroke="#c0c4cc"/><path d="M12 1.2L15.4 4.6V15.6H3.4" fill="none" stroke="#8c9098" stroke-width="1.2"/><path d="M12 1.4V4.6H15.2" fill="#eceef2" stroke="#a8acb4" stroke-width=".8"/><circle cx="8.4" cy="6.6" r="2.3" fill="#c4dcf4" stroke="#4c84c4" stroke-width="1"/><circle cx="11.4" cy="10.8" r="2.1" fill="#cce0f6" stroke="#5c94d0" stroke-width="1"/><path d="M6.2 9.6L8.6 12.4" stroke="#6c9cd0" stroke-width="1"/></svg>
<span class="c" style="left:23px;letter-spacing:-0.15px;">ACPI.sys</span>
<span class="c" style="left:307px;letter-spacing:0.45px;">fffff880`00f4a000</span>
<span class="c" style="left:427px;letter-spacing:0.45px;">fffff880`00fa1000</span>
<span class="c" style="left:547px;letter-spacing:-0.06px;">0x00057000</span>
<span class="c" style="left:667px;letter-spacing:-0.1px;">0x4ce79294</span>
<span class="c" style="left:787px;letter-spacing:0.15px;">20.11.2010 10:19:16</span>
</div>
<div class="row" style="top:189px">
<svg style="left:4px;top:0" width="16" height="17" viewBox="0 0 16 17"><path d="M3.8 1.2H12L15.4 4.6V15.6H3.8Z" fill="#fff"/><path d="M3.8 15.6V1.2H12" fill="none" stroke="#c0c4cc"/><path d="M12 1.2L15.4 4.6V15.6H3.4" fill="none" stroke="#8c9098" stroke-width="1.2"/><path d="M12 1.4V4.6H15.2" fill="#eceef2" stroke="#a8acb4" stroke-width=".8"/><circle cx="8.4" cy="6.6" r="2.3" fill="#c4dcf4" stroke="#4c84c4" stroke-width="1"/><circle cx="11.4" cy="10.8" r="2.1" fill="#cce0f6" stroke="#5c94d0" stroke-width="1"/><path d="M6.2 9.6L8.6 12.4" stroke="#6c9cd0" stroke-width="1"/></svg>
<span class="c" style="left:23px;transform:scaleX(0.919);transform-origin:0 0;">WMILIB.SYS</span>
<span class="c" style="left:307px;letter-spacing:0.45px;">fffff880`00fa1000</span>
<span class="c" style="left:427px;letter-spacing:0.45px;">fffff880`00faa000</span>
<span class="c" style="left:547px;letter-spacing:-0.06px;">0x00009000</span>
<span class="c" style="left:667px;">0x4a5bc117</span>
<span class="c" style="left:787px;letter-spacing:0.11px;">14.07.2009 00:19:51</span>
</div>
<div class="row" style="top:206px">
<svg style="left:4px;top:0" width="16" height="17" viewBox="0 0 16 17"><path d="M3.8 1.2H12L15.4 4.6V15.6H3.8Z" fill="#fff"/><path d="M3.8 15.6V1.2H12" fill="none" stroke="#c0c4cc"/><path d="M12 1.2L15.4 4.6V15.6H3.4" fill="none" stroke="#8c9098" stroke-width="1.2"/><path d="M12 1.4V4.6H15.2" fill="#eceef2" stroke="#a8acb4" stroke-width=".8"/><circle cx="8.4" cy="6.6" r="2.3" fill="#c4dcf4" stroke="#4c84c4" stroke-width="1"/><circle cx="11.4" cy="10.8" r="2.1" fill="#cce0f6" stroke="#5c94d0" stroke-width="1"/><path d="M6.2 9.6L8.6 12.4" stroke="#6c9cd0" stroke-width="1"/></svg>
<span class="c" style="left:23px;letter-spacing:-0.06px;">msisadrv.sys</span>
<span class="c" style="left:307px;letter-spacing:0.45px;">fffff880`00faa000</span>
<span class="c" style="left:427px;letter-spacing:0.45px;">fffff880`00fb4000</span>
<span class="c" style="left:547px;letter-spacing:-0.06px;">0x0000a000</span>
<span class="c" style="left:667px;">0x4a5bc0fe</span>
<span class="c" style="left:787px;letter-spacing:0.11px;">14.07.2009 00:19:26</span>
</div>
<div class="row" style="top:223px">
<svg style="left:4px;top:0" width="16" height="17" viewBox="0 0 16 17"><path d="M3.8 1.2H12L15.4 4.6V15.6H3.8Z" fill="#fff"/><path d="M3.8 15.6V1.2H12" fill="none" stroke="#c0c4cc"/><path d="M12 1.2L15.4 4.6V15.6H3.4" fill="none" stroke="#8c9098" stroke-width="1.2"/><path d="M12 1.4V4.6H15.2" fill="#eceef2" stroke="#a8acb4" stroke-width=".8"/><circle cx="8.4" cy="6.6" r="2.3" fill="#c4dcf4" stroke="#4c84c4" stroke-width="1"/><circle cx="11.4" cy="10.8" r="2.1" fill="#cce0f6" stroke="#5c94d0" stroke-width="1"/><path d="M6.2 9.6L8.6 12.4" stroke="#6c9cd0" stroke-width="1"/></svg>
<span class="c" style="left:23px;letter-spacing:-0.09px;">pci.sys</span>
<span class="c" style="left:307px;letter-spacing:0.45px;">fffff880`00fb4000</span>
<span class="c" style="left:427px;letter-spacing:0.45px;">fffff880`00fe7000</span>
<span class="c" style="left:547px;letter-spacing:-0.06px;">0x00033000</span>
<span class="c" style="left:667px;">0x4ce7928f</span>
<span class="c" style="left:787px;letter-spacing:0.19px;">20.11.2010 10:19:11</span>
</div>
<div class="row" style="top:240px">
<svg style="left:4px;top:0" width="16" height="17" viewBox="0 0 16 17"><path d="M3.8 1.2H12L15.4 4.6V15.6H3.8Z" fill="#fff"/><path d="M3.8 15.6V1.2H12" fill="none" stroke="#c0c4cc"/><path d="M12 1.2L15.4 4.6V15.6H3.4" fill="none" stroke="#8c9098" stroke-width="1.2"/><path d="M12 1.4V4.6H15.2" fill="#eceef2" stroke="#a8acb4" stroke-width=".8"/><circle cx="8.4" cy="6.6" r="2.3" fill="#c4dcf4" stroke="#4c84c4" stroke-width="1"/><circle cx="11.4" cy="10.8" r="2.1" fill="#cce0f6" stroke="#5c94d0" stroke-width="1"/><path d="M6.2 9.6L8.6 12.4" stroke="#6c9cd0" stroke-width="1"/></svg>
<span class="c" style="left:23px;letter-spacing:0.23px;">vdrvroot.sys</span>
<span class="c" style="left:307px;letter-spacing:0.45px;">fffff880`00fe7000</span>
<span class="c" style="left:427px;letter-spacing:0.52px;">fffff880`00ff4000</span>
<span class="c" style="left:547px;letter-spacing:-0.06px;">0x0000d000</span>
<span class="c" style="left:667px;letter-spacing:-0.1px;">0x4a5bcadb</span>
<span class="c" style="left:787px;letter-spacing:0.11px;">14.07.2009 01:01:31</span>
</div>
<div class="row" style="top:257px">
<svg style="left:4px;top:0" width="16" height="17" viewBox="0 0 16 17"><path d="M3.8 1.2H12L15.4 4.6V15.6H3.8Z" fill="#fff"/><path d="M3.8 15.6V1.2H12" fill="none" stroke="#c0c4cc"/><path d="M12 1.2L15.4 4.6V15.6H3.4" fill="none" stroke="#8c9098" stroke-width="1.2"/><path d="M12 1.4V4.6H15.2" fill="#eceef2" stroke="#a8acb4" stroke-width=".8"/><circle cx="8.4" cy="6.6" r="2.3" fill="#c4dcf4" stroke="#4c84c4" stroke-width="1"/><circle cx="11.4" cy="10.8" r="2.1" fill="#cce0f6" stroke="#5c94d0" stroke-width="1"/><path d="M6.2 9.6L8.6 12.4" stroke="#6c9cd0" stroke-width="1"/></svg>
<span class="c" style="left:23px;letter-spacing:-0.17px;">iusb3hcs.sys</span>
<span class="c" style="left:307px;letter-spacing:0.52px;">fffff880`00ff4000</span>
<span class="c" style="left:427px;letter-spacing:0.5px;">fffff880`00ffc000</span>
<span class="c" style="left:547px;letter-spacing:-0.06px;">0x00008000</span>
<span class="c" style="left:667px;letter-spacing:0.05px;">0x4f31de82</span>
<span class="c" style="left:787px;letter-spacing:0.11px;">08.02.2012 03:33:42</span>
</div>
<div class="row" style="top:274px">
<svg style="left:4px;top:0" width="16" height="17" viewBox="0 0 16 17"><path d="M3.8 1.2H12L15.4 4.6V15.6H3.8Z" fill="#fff"/><path d="M3.8 15.6V1.2H12" fill="none" stroke="#c0c4cc"/><path d="M12 1.2L15.4 4.6V15.6H3.4" fill="none" stroke="#8c9098" stroke-width="1.2"/><path d="M12 1.4V4.6H15.2" fill="#eceef2" stroke="#a8acb4" stroke-width=".8"/><circle cx="8.4" cy="6.6" r="2.3" fill="#c4dcf4" stroke="#4c84c4" stroke-width="1"/><circle cx="11.4" cy="10.8" r="2.1" fill="#cce0f6" stroke="#5c94d0" stroke-width="1"/><path d="M6.2 9.6L8.6 12.4" stroke="#6c9cd0" stroke-width="1"/></svg>
<span class="c" style="left:23px;letter-spacing:0.1px;">partmgr.sys</span>
<span class="c" style="left:307px;letter-spacing:0.39px;">fffff880`00e00000</span>
<span class="c" style="left:427px;letter-spacing:0.39px;">fffff880`00e15000</span>
<span class="c" style="left:547px;letter-spacing:-0.06px;">0x00015000</span>
<span class="c" style="left:667px;">0x4f641bc1</span>
<span class="c" style="left:787px;letter-spacing:0.11px;">17.03.2012 06:06:09</span>
</div>
<div class="row" style="top:291px">
<svg style="left:4px;top:0" width="16" height="17" viewBox="0 0 16 17"><path d="M3.8 1.2H12L15.4 4.6V15.6H3.8Z" fill="#fff"/><path d="M3.8 15.6V1.2H12" fill="none" stroke="#c0c4cc"/><path d="M12 1.2L15.4 4.6V15.6H3.4" fill="none" stroke="#8c9098" stroke-width="1.2"/><path d="M12 1.4V4.6H15.2" fill="#eceef2" stroke="#a8acb4" stroke-width=".8"/><circle cx="8.4" cy="6.6" r="2.3" fill="#c4dcf4" stroke="#4c84c4" stroke-width="1"/><circle cx="11.4" cy="10.8" r="2.1" fill="#cce0f6" stroke="#5c94d0" stroke-width="1"/><path d="M6.2 9.6L8.6 12.4" stroke="#6c9cd0" stroke-width="1"/></svg>
<span class="c" style="left:23px;">volmgr.sys</span>
<span class="c" style="left:307px;letter-spacing:0.39px;">fffff880`00e15000</span>
<span class="c" style="left:427px;letter-spacing:0.39px;">fffff880`00e2a000</span>
<span class="c" style="left:547px;letter-spacing:-0.06px;">0x00015000</span>
<span class="c" style="left:667px;letter-spacing:-0.1px;">0x4ce792a0</span>
<span class="c" style="left:787px;letter-spacing:0.15px;">20.11.2010 10:19:28</span>
</div>
<div class="row" style="top:308px">
<svg style="left:4px;top:0" width="16" height="17" viewBox="0 0 16 17"><path d="M3.8 1.2H12L15.4 4.6V15.6H3.8Z" fill="#fff"/><path d="M3.8 15.6V1.2H12" fill="none" stroke="#c0c4cc"/><path d="M12 1.2L15.4 4.6V15.6H3.4" fill="none" stroke="#8c9098" stroke-width="1.2"/><path d="M12 1.4V4.6H15.2" fill="#eceef2" stroke="#a8acb4" stroke-width=".8"/><circle cx="8.4" cy="6.6" r="2.3" fill="#c4dcf4" stroke="#4c84c4" stroke-width="1"/><circle cx="11.4" cy="10.8" r="2.1" fill="#cce0f6" stroke="#5c94d0" stroke-width="1"/><path d="M6.2 9.6L8.6 12.4" stroke="#6c9cd0" stroke-width="1"/></svg>
<span class="c" style="left:23px;">volmgrx.sys</span>
<span class="c" style="left:307px;letter-spacing:0.39px;">fffff880`00d8d000</span>
<span class="c" style="left:427px;letter-spacing:0.39px;">fffff880`00de9000</span>
<span class="c" style="left:547px;letter-spacing:-0.1px;">0x0005c000</span>
<span class="c" style="left:667px;letter-spacing:-0.1px;">0x4ce792eb</span>
<span class="c" style="left:787px;letter-spacing:0.15px;">20.11.2010 10:20:43</span>
</div>
<div class="row" style="top:325px">
<svg style="left:4px;top:0" width="16" height="17" viewBox="0 0 16 17"><path d="M3.8 1.2H12L15.4 4.6V15.6H3.8Z" fill="#fff"/><path d="M3.8 15.6V1.2H12" fill="none" stroke="#c0c4cc"/><path d="M12 1.2L15.4 4.6V15.6H3.4" fill="none" stroke="#8c9098" stroke-width="1.2"/><path d="M12 1.4V4.6H15.2" fill="#eceef2" stroke="#a8acb4" stroke-width=".8"/><circle cx="8.4" cy="6.6" r="2.3" fill="#c4dcf4" stroke="#4c84c4" stroke-width="1"/><circle cx="11.4" cy="10.8" r="2.1" fill="#cce0f6" stroke="#5c94d0" stroke-width="1"/><path d="M6.2 9.6L8.6 12.4" stroke="#6c9cd0" stroke-width="1"/></svg>
<span class="c" style="left:23px;letter-spacing:-0.04px;">mountmgr.sys</span>
<span class="c" style="left:307px;letter-spacing:0.39px;">fffff880`00e2a000</span>
<span class="c" style="left:427px;letter-spacing:0.39px;">fffff880`00e44000</span>
<span class="c" style="left:547px;letter-spacing:-0.06px;">0x0001a000</span>
<span class="c" style="left:667px;letter-spacing:-0.1px;">0x4ce79299</span>
<span class="c" style="left:787px;letter-spacing:0.15px;">20.11.2010 10:14:35</span>
</div>
<div class="row" style="top:342px">
<svg style="left:4px;top:0" width="16" height="17" viewBox="0 0 16 17"><path d="M3.8 1.2H12L15.4 4.6V15.6H3.8Z" fill="#fff"/><path d="M3.8 15.6V1.2H12" fill="none" stroke="#c0c4cc"/><path d="M12 1.2L15.4 4.6V15.6H3.4" fill="none" stroke="#8c9098" stroke-width="1.2"/><path d="M12 1.4V4.6H15.2" fill="#eceef2" stroke="#a8acb4" stroke-width=".8"/><circle cx="8.4" cy="6.6" r="2.3" fill="#c4dcf4" stroke="#4c84c4" stroke-width="1"/><circle cx="11.4" cy="10.8" r="2.1" fill="#cce0f6" stroke="#5c94d0" stroke-width="1"/><path d="M6.2 9.6L8.6 12.4" stroke="#6c9cd0" stroke-width="1"/></svg>
<span class="c" style="left:23px;letter-spacing:0.06px;">atapi.sys</span>
<span class="c" style="left:307px;letter-spacing:0.39px;">fffff880`00e44000</span>
<span class="c" style="left:427px;letter-spacing:0.39px;">fffff880`00e4d000</span>
<span class="c" style="left:547px;letter-spacing:-0.06px;">0x00009000</span>
<span class="c" style="left:667px;">0x4a5bc113</span>
<span class="c" style="left:787px;letter-spacing:0.11px;">14.07.2009 00:19:47</span>
</div>
<div class="row" style="top:359px">
<svg style="left:4px;top:0" width="16" height="17" viewBox="0 0 16 17"><path d="M3.8 1.2H12L15.4 4.6V15.6H3.8Z" fill="#fff"/><path d="M3.8 15.6V1.2H12" fill="none" stroke="#c0c4cc"/><path d="M12 1.2L15.4 4.6V15.6H3.4" fill="none" stroke="#8c9098" stroke-width="1.2"/><path d="M12 1.4V4.6H15.2" fill="#eceef2" stroke="#a8acb4" stroke-width=".8"/><circle cx="8.4" cy="6.6" r="2.3" fill="#c4dcf4" stroke="#4c84c4" stroke-width="1"/><circle cx="11.4" cy="10.8" r="2.1" fill="#cce0f6" stroke="#5c94d0" stroke-width="1"/><path d="M6.2 9.6L8.6 12.4" stroke="#6c9cd0" stroke-width="1"/></svg>
<span class="c" style="left:23px;letter-spacing:-0.12px;">ataport.SYS</span>
<span class="c" style="left:307px;letter-spacing:0.39px;">fffff880`00e4d000</span>
<span class="c" style="left:427px;letter-spacing:0.39px;">fffff880`00e77000</span>
<span class="c" style="left:547px;letter-spacing:-0.06px;">0x0002a000</span>
<span class="c" style="left:667px;letter-spacing:0.16px;">0x51fef9b5</span>
<span class="c" style="left:787px;letter-spacing:0.11px;">05.08.2013 02:02:45</span>
</div>
<div class="row" style="top:376px">
<svg style="left:4px;top:0" width="16" height="17" viewBox="0 0 16 17"><path d="M3.8 1.2H12L15.4 4.6V15.6H3.8Z" fill="#fff"/><path d="M3.8 15.6V1.2H12" fill="none" stroke="#c0c4cc"/><path d="M12 1.2L15.4 4.6V15.6H3.4" fill="none" stroke="#8c9098" stroke-width="1.2"/><path d="M12 1.4V4.6H15.2" fill="#eceef2" stroke="#a8acb4" stroke-width=".8"/><circle cx="8.4" cy="6.6" r="2.3" fill="#c4dcf4" stroke="#4c84c4" stroke-width="1"/><circle cx="11.4" cy="10.8" r="2.1" fill="#cce0f6" stroke="#5c94d0" stroke-width="1"/><path d="M6.2 9.6L8.6 12.4" stroke="#6c9cd0" stroke-width="1"/></svg>
<span class="c" style="left:23px;transform:scaleX(0.956);transform-origin:0 0;">msahci.sys</span>
<span class="c" style="left:307px;letter-spacing:0.39px;">fffff880`00de9000</span>
<span class="c" style="left:427px;letter-spacing:0.45px;">fffff880`00df4000</span>
<span class="c" style="left:547px;letter-spacing:-0.06px;">0x0000b000</span>
<span class="c" style="left:667px;letter-spacing:-0.1px;">0x4ce7a416</span>
<span class="c" style="left:787px;letter-spacing:0.19px;">20.11.2010 11:33:58</span>
</div>
<div class="row" style="top:393px">
<svg style="left:4px;top:0" width="16" height="17" viewBox="0 0 16 17"><path d="M3.8 1.2H12L15.4 4.6V15.6H3.8Z" fill="#fff"/><path d="M3.8 15.6V1.2H12" fill="none" stroke="#c0c4cc"/><path d="M12 1.2L15.4 4.6V15.6H3.4" fill="none" stroke="#8c9098" stroke-width="1.2"/><path d="M12 1.4V4.6H15.2" fill="#eceef2" stroke="#a8acb4" stroke-width=".8"/><circle cx="8.4" cy="6.6" r="2.3" fill="#c4dcf4" stroke="#4c84c4" stroke-width="1"/><circle cx="11.4" cy="10.8" r="2.1" fill="#cce0f6" stroke="#5c94d0" stroke-width="1"/><path d="M6.2 9.6L8.6 12.4" stroke="#6c9cd0" stroke-width="1"/></svg>
<span class="c" style="left:23px;transform:scaleX(0.898);transform-origin:0 0;">PCIIDEX.SYS</span>
<span class="c" style="left:307px;letter-spacing:0.36px;">fffff880`00c00000</span>
<span class="c" style="left:427px;letter-spacing:0.36px;">fffff880`00c10000</span>
<span class="c" style="left:547px;letter-spacing:-0.06px;">0x00010000</span>
<span class="c" style="left:667px;">0x4a5bc114</span>
<span class="c" style="left:787px;letter-spacing:0.11px;">14.07.2009 00:19:48</span>
</div>
<div class="row" style="top:410px">
<svg style="left:4px;top:0" width="16" height="17" viewBox="0 0 16 17"><path d="M3.8 1.2H12L15.4 4.6V15.6H3.8Z" fill="#fff"/><path d="M3.8 15.6V1.2H12" fill="none" stroke="#c0c4cc"/><path d="M12 1.2L15.4 4.6V15.6H3.4" fill="none" stroke="#8c9098" stroke-width="1.2"/><path d="M12 1.4V4.6H15.2" fill="#eceef2" stroke="#a8acb4" stroke-width=".8"/><circle cx="8.4" cy="6.6" r="2.3" fill="#c4dcf4" stroke="#4c84c4" stroke-width="1"/><circle cx="11.4" cy="10.8" r="2.1" fill="#cce0f6" stroke="#5c94d0" stroke-width="1"/><path d="M6.2 9.6L8.6 12.4" stroke="#6c9cd0" stroke-width="1"/></svg>
<span class="c" style="left:23px;letter-spacing:0.02px;">amdxata.sys</span>
<span class="c" style="left:307px;letter-spacing:0.36px;">fffff880`00c10000</span>
<span class="c" style="left:427px;letter-spacing:0.36px;">fffff880`00c1b000</span>
<span class="c" style="left:547px;letter-spacing:-0.06px;">0x0000b000</span>
<span class="c" style="left:667px;letter-spacing:-0.1px;">0x4ba3a3ca</span>
<span class="c" style="left:787px;letter-spacing:0.11px;">19.03.2010 17:18:18</span>
</div>
<div class="row" style="top:427px">
<svg style="left:4px;top:0" width="16" height="17" viewBox="0 0 16 17"><path d="M3.8 1.2H12L15.4 4.6V15.6H3.8Z" fill="#fff"/><path d="M3.8 15.6V1.2H12" fill="none" stroke="#c0c4cc"/><path d="M12 1.2L15.4 4.6V15.6H3.4" fill="none" stroke="#8c9098" stroke-width="1.2"/><path d="M12 1.4V4.6H15.2" fill="#eceef2" stroke="#a8acb4" stroke-width=".8"/><circle cx="8.4" cy="6.6" r="2.3" fill="#c4dcf4" stroke="#4c84c4" stroke-width="1"/><circle cx="11.4" cy="10.8" r="2.1" fill="#cce0f6" stroke="#5c94d0" stroke-width="1"/><path d="M6.2 9.6L8.6 12.4" stroke="#6c9cd0" stroke-width="1"/></svg>
<span class="c" style="left:23px;letter-spacing:0.15px;">fltmgr.sys</span>
<span class="c" style="left:307px;letter-spacing:0.39px;">fffff880`010ad000</span>
<span class="c" style="left:427px;letter-spacing:0.45px;">fffff880`010f9000</span>
<span class="c" style="left:547px;letter-spacing:-0.1px;">0x0004c000</span>
<span class="c" style="left:667px;letter-spacing:-0.13px;">0x4ce7929c</span>
<span class="c" style="left:787px;letter-spacing:0.15px;">20.11.2010 10:19:24</span>
</div>
<div class="row" style="top:444px">
<svg style="left:4px;top:0" width="16" height="17" viewBox="0 0 16 17"><path d="M3.8 1.2H12L15.4 4.6V15.6H3.8Z" fill="#fff"/><path d="M3.8 15.6V1.2H12" fill="none" stroke="#c0c4cc"/><path d="M12 1.2L15.4 4.6V15.6H3.4" fill="none" stroke="#8c9098" stroke-width="1.2"/><path d="M12 1.4V4.6H15.2" fill="#eceef2" stroke="#a8acb4" stroke-width=".8"/><circle cx="8.4" cy="6.6" r="2.3" fill="#c4dcf4" stroke="#4c84c4" stroke-width="1"/><circle cx="11.4" cy="10.8" r="2.1" fill="#cce0f6" stroke="#5c94d0" stroke-width="1"/><path d="M6.2 9.6L8.6 12.4" stroke="#6c9cd0" stroke-width="1"/></svg>
<span class="c" style="left:23px;letter-spacing:0.05px;">fileinfo.sys</span>
<span class="c" style="left:307px;letter-spacing:0.45px;">fffff880`010f9000</span>
<span class="c" style="left:427px;letter-spacing:0.43px;">fffff880`0110d000</span>
<span class="c" style="left:547px;letter-spacing:-0.06px;">0x00014000</span>
<span class="c" style="left:667px;letter-spacing:-0.1px;">0x4a5bc481</span>
<span class="c" style="left:787px;letter-spacing:0.11px;">14.07.2009 00:34:25</span>
</div>
<div class="row" style="top:461px">
<svg style="left:4px;top:0" width="16" height="17" viewBox="0 0 16 17"><path d="M3.8 1.2H12L15.4 4.6V15.6H3.8Z" fill="#fff"/><path d="M3.8 15.6V1.2H12" fill="none" stroke="#c0c4cc"/><path d="M12 1.2L15.4 4.6V15.6H3.4" fill="none" stroke="#8c9098" stroke-width="1.2"/><path d="M12 1.4V4.6H15.2" fill="#eceef2" stroke="#a8acb4" stroke-width=".8"/><circle cx="8.4" cy="6.6" r="2.3" fill="#c4dcf4" stroke="#4c84c4" stroke-width="1"/><circle cx="11.4" cy="10.8" r="2.1" fill="#cce0f6" stroke="#5c94d0" stroke-width="1"/><path d="M6.2 9.6L8.6 12.4" stroke="#6c9cd0" stroke-width="1"/></svg>
<span class="c" style="left:23px;letter-spacing:0.11px;">Ntfs.sys</span>
<span class="c" style="left:307px;letter-spacing:0.39px;">fffff880`01224000</span>
<span class="c" style="left:427px;letter-spacing:0.36px;">fffff880`013c6000</span>
<span class="c" style="left:547px;letter-spacing:-0.06px;">0x001a2000</span>
<span class="c" style="left:667px;letter-spacing:0.12px;">0x5167f5fc</span>
<span class="c" style="left:787px;letter-spacing:0.11px;">12.04.2013 12:54:36</span>
</div>
<div class="row" style="top:478px">
<svg style="left:4px;top:0" width="16" height="17" viewBox="0 0 16 17"><path d="M3.8 1.2H12L15.4 4.6V15.6H3.8Z" fill="#fff"/><path d="M3.8 15.6V1.2H12" fill="none" stroke="#c0c4cc"/><path d="M12 1.2L15.4 4.6V15.6H3.4" fill="none" stroke="#8c9098" stroke-width="1.2"/><path d="M12 1.4V4.6H15.2" fill="#eceef2" stroke="#a8acb4" stroke-width=".8"/><circle cx="8.4" cy="6.6" r="2.3" fill="#c4dcf4" stroke="#4c84c4" stroke-width="1"/><circle cx="11.4" cy="10.8" r="2.1" fill="#cce0f6" stroke="#5c94d0" stroke-width="1"/><path d="M6.2 9.6L8.6 12.4" stroke="#6c9cd0" stroke-width="1"/></svg>
<span class="c" style="left:23px;letter-spacing:-0.17px;">msrpc.sys</span>
<span class="c" style="left:307px;letter-spacing:0.43px;">fffff880`0110d000</span>
<span class="c" style="left:427px;letter-spacing:0.43px;">fffff880`0116b000</span>
<span class="c" style="left:547px;letter-spacing:-0.06px;">0x0005e000</span>
<span class="c" style="left:667px;letter-spacing:-0.1px;">0x4ce79334</span>
<span class="c" style="left:787px;letter-spacing:0.15px;">20.11.2010 10:21:56</span>
</div>
<div class="row" style="top:495px">
<svg style="left:4px;top:0" width="16" height="17" viewBox="0 0 16 17"><path d="M3.8 1.2H12L15.4 4.6V15.6H3.8Z" fill="#fff"/><path d="M3.8 15.6V1.2H12" fill="none" stroke="#c0c4cc"/><path d="M12 1.2L15.4 4.6V15.6H3.4" fill="none" stroke="#8c9098" stroke-width="1.2"/><path d="M12 1.4V4.6H15.2" fill="#eceef2" stroke="#a8acb4" stroke-width=".8"/><circle cx="8.4" cy="6.6" r="2.3" fill="#c4dcf4" stroke="#4c84c4" stroke-width="1"/><circle cx="11.4" cy="10.8" r="2.1" fill="#cce0f6" stroke="#5c94d0" stroke-width="1"/><path d="M6.2 9.6L8.6 12.4" stroke="#6c9cd0" stroke-width="1"/></svg>
<span class="c" style="left:23px;transform:scaleX(0.962);transform-origin:0 0;">mcupc.sys</span>
<span class="c" style="left:307px;letter-spacing:0.43px;">fffff880`0116b000</span>
<span class="c" style="left:427px;letter-spacing:0.43px;">fffff880`01174000</span>
<span class="c" style="left:547px;letter-spacing:-0.06px;">0x00009000</span>
<span class="c" style="left:667px;letter-spacing:-0.1px;">0x4ce79334</span>
<span class="c" style="left:787px;letter-spacing:0.15px;">20.11.2010 10:21:56</span>
</div>
<div class="sb" style="left:1904.2px;top:2px;width:14.5px;height:515px"></div>
<div class="raised2" style="left:1904.2px;top:2px;width:14.5px;height:16px"></div>
<svg style="left:1906px;top:7.5px" width="9" height="5.5" viewBox="0 0 8 5"><path d="M0 4.5H8L4 .5Z" fill="#000"/></svg>
<div class="raised2" style="left:1904.2px;top:18px;width:14.5px;height:86px"></div>
<div class="raised2" style="left:1904.2px;top:477px;width:14.5px;height:16px"></div>
<svg style="left:1906px;top:482px" width="9" height="5.5" viewBox="0 0 8 5"><path d="M0 .5H8L4 4.5Z" fill="#000"/></svg>
<div class="sunken" style="left:0;top:0;width:1920px;height:515px"></div>
<div style="left:0;top:0;width:1.6px;height:515px;background:#202020"></div>
</div>
<div style="left:1918.4px;top:67px;width:1.6px;height:985px;background:#000"></div>
<div class="raised2" style="left:372px;top:217px;width:495px;height:694.4px">
<div style="left:3px;top:3px;width:489px;height:18px;background:linear-gradient(90deg,#808080,#c0c0c0)"></div>
<div style="left:5px;top:6px;font-weight:bold;color:#eceae4;letter-spacing:.35px">Properties</div>
<div class="btn" style="left:474px;top:5px;width:16px;height:14px"></div>
<svg style="left:478px;top:8px" width="8" height="7" viewBox="0 0 8 7"><path d="M0 0L7 7M1 0L8 7M7 0L0 7M8 0L1 7" stroke="#000" stroke-width="1.25"/></svg>
<div class="lab" style="top:35px">Dump File:</div>
<div class="ed" style="top:33px"><span style="letter-spacing:0.46px;">032115-30981-01.dmp</span></div>
<div class="lab" style="top:59px">Crash Time:</div>
<div class="ed" style="top:57px"><span style="letter-spacing:0.53px;">21.03.2015 00:39:24</span></div>
<div class="lab" style="top:83px">Bug Check String:</div>
<div class="ed" style="top:81px"><span style="letter-spacing:0.25px;">DRIVER_IRQL_NOT_LESS_OR_EQUAL</span></div>
<div class="lab" style="top:107px">Bug Check Code:</div>
<div class="ed" style="top:105px"><span style="letter-spacing:0.37px;">0x000000d1</span></div>
<div class="lab" style="top:131px">Parameter 1:</div>
<div class="ed" style="top:129px"><span style="letter-spacing:0.63px;">00000000`00000000</span></div>
<div class="lab" style="top:155px">Parameter 2:</div>
<div class="ed" style="top:153px"><span style="letter-spacing:0.63px;">00000000`00000002</span></div>
<div class="lab" style="top:179px">Parameter 3:</div>
<div class="ed" style="top:177px"><span style="letter-spacing:0.63px;">00000000`00000008</span></div>
<div class="lab" style="top:203px">Parameter 4:</div>
<div class="ed" style="top:201px"><span style="letter-spacing:0.63px;">00000000`00000000</span></div>
<div class="lab" style="top:227px">Caused By Driver:</div>
<div class="ed" style="top:225px"><span style="letter-spacing:0.14px;">ntoskrnl.exe</span></div>
<div class="lab" style="top:251px">Caused By Address:</div>
<div class="ed" style="top:249px"><span style="letter-spacing:0.33px;">ntoskrnl.exe+74ec0</span></div>
<div class="lab" style="top:275px">File Description:</div>
<div class="ed" style="top:273px"><span style="letter-spacing:0.25px;">NT Kernel &amp; System</span></div>
<div class="lab" style="top:299px">Product Name:</div>
<div class="ed" style="top:297px"><span style="letter-spacing:0.26px;">Microsoft® Windows® Operating System</span></div>
<div class="lab" style="top:323px">Company:</div>
<div class="ed" style="top:321px"><span style="letter-spacing:0.08px;">Microsoft Corporation</span></div>
<div class="lab" style="top:347px">File Version:</div>
<div class="ed" style="top:345px"><span style="letter-spacing:0.51px;">6.1.7601.18741 (win7sp1_gdr.150202-1526)</span></div>
<div class="lab" style="top:371px">Processor:</div>
<div class="ed" style="top:369px"><span style="letter-spacing:0.23px;">x64</span></div>
<div class="lab" style="top:395px">Crash Address:</div>
<div class="ed" style="top:393px"><span style="letter-spacing:0.33px;">ntoskrnl.exe+74ec0</span></div>
<div class="lab" style="top:419px">Stack Address 1:</div>
<div class="ed" style="top:417px"></div>
<div class="lab" style="top:443px">Stack Address 2:</div>
<div class="ed" style="top:441px"></div>
<div class="lab" style="top:467px">Stack Address 3:</div>
<div class="ed" style="top:465px"></div>
<div class="lab" style="top:491px">Computer Name:</div>
<div class="ed" style="top:489px"></div>
<div class="lab" style="top:515px">Full Path:</div>
<div class="ed" style="top:513px"><span style="letter-spacing:0.41px;">C:\Windows\Minidump\032115-30981-01.dmp</span></div>
<div class="lab" style="top:539px">Processors Count:</div>
<div class="ed" style="top:537px"><span style="letter-spacing:-0.53px;">8</span></div>
<div class="lab" style="top:563px">Major Version:</div>
<div class="ed" style="top:561px"><span style="letter-spacing:0.07px;">15</span></div>
<div class="lab" style="top:587px">Minor Version:</div>
<div class="ed" style="top:585px"><span style="letter-spacing:0.04px;">7601</span></div>
<div class="lab" style="top:611px">Dump File Size:</div>
<div class="ed" style="top:609px"><span style="letter-spacing:0.54px;">285.480</span></div>
<div class="lab" style="top:635px">Dump File Time:</div>
<div class="ed" style="top:633px"><span style="letter-spacing:0.56px;">21.03.2015 00:40:29</span></div>
<div class="raised" style="left:404px;top:662px;width:76px;height:23.5px"></div>
<div style="left:404px;top:666.5px;width:76px;text-align:center;font-size:13px;line-height:15px;transform:scaleX(.86)">OK</div>
</div>
<div style="left:0;top:1052px;width:1920px;height:28px;background:#d4d0c8;box-shadow:inset 0 1px #d4d0c8,inset 0 2px #fff"></div>
<div class="raised" style="left:2px;top:1056px;width:52px;height:22px"></div>
<svg style="left:3.5px;top:1056px" width="18" height="17" viewBox="0 0 17 16" preserveAspectRatio="none"><path d="M2.4 2.6C4.2 1.4 6.2 1.6 7.8 2.6L6.6 7.6C5 6.8 3 6.6 1.2 7.8Z" fill="#d8481c"/><path d="M8.8 3C10.6 3.8 12.8 3.6 14.8 2.2L13.6 7.2C11.6 8.6 9.4 8.8 7.6 8Z" fill="#6cac2c"/><path d="M1 8.8C2.8 7.6 4.6 7.8 6.4 8.6L5.2 13.6C3.4 12.8 1.6 12.6 -.2 13.8Z" fill="#2c74d0"/><path d="M7.4 9C9.2 9.8 11.2 9.8 13.2 8.4L12 13.4C10 14.8 8 14.8 6.2 14Z" fill="#f4bc1c"/><path d="M7.8 2.6L6.2 14" stroke="#40382c" stroke-width=".5" opacity=".5"/></svg>
<div style="left:20.5px;top:1061px;font-weight:bold;font-size:11.5px;letter-spacing:.5px;-webkit-text-stroke:.4px">Start</div>
<div class="raised" style="left:63px;top:1056px;width:32px;height:22px"></div>
<div class="raised" style="left:165px;top:1056px;width:32px;height:22px"></div>
<div class="raised" style="left:199px;top:1056px;width:32px;height:22px"></div>
<svg style="left:70.5px;top:1057.5px" width="18" height="19" viewBox="0 0 18 19"><circle cx="9" cy="10.2" r="5.6" fill="#bfe3f8" stroke="#2c9ce4" stroke-width="3"/><path d="M4.4 10.2H14.4" stroke="#2c9ce4" stroke-width="2.4"/><rect x="10.2" y="11.5" width="6" height="2.6" fill="#d4d0c8"/><path d="M2.2 13.5C-.5 7 6 1.5 13.2 2.2C15.2 2.4 15.6 3.6 14.6 5" fill="none" stroke="#f0c02c" stroke-width="1.5"/></svg>
<svg style="left:104px;top:1059px" width="18" height="17" viewBox="0 0 18 17"><path d="M1 3H7L8 4.5H16V14H1Z" fill="#f0d878" stroke="#c8a838" stroke-width=".8"/><rect x="3" y="7" width="12" height="8" fill="#58a8e0"/><rect x="5" y="8.5" width="8" height="4" fill="#d8ecf8"/><rect x="6" y="13" width="6" height="3" fill="#3c88c8"/></svg>
<svg style="left:138.5px;top:1058.5px" width="16.5" height="16.5" viewBox="0 0 19 19"><rect x=".6" y=".6" width="17.8" height="17.8" fill="#b4d6f2" stroke="#6ea8dc" stroke-width="1.2"/><circle cx="9.5" cy="9.5" r="6.6" fill="#f08a1c" stroke="#f8b868" stroke-width=".8"/><path d="M7.4 5.8L13.2 9.5L7.4 13.2Z" fill="#fff"/></svg>
<svg style="left:172px;top:1058px" width="18" height="18" viewBox="0 0 18 18"><path d="M2.8 1.6Q10.5 9 2.8 16.4M15.2 1.6Q7.5 9 15.2 16.4" stroke="#1c3c7c" stroke-width="1.7" fill="none"/><circle cx="9" cy="9" r="3.3" fill="#f4cc24" stroke="#f8e49c" stroke-width=".9"/></svg>
<svg style="left:206px;top:1058px" width="19" height="18" viewBox="0 0 19 18"><path d="M2.4 2.2L14.6 1.4L15.4 10L4 11.8Z" fill="#0808e0"/><path d="M3 3L9 2.6L5 11Z" fill="#2838f0" opacity=".6"/><path d="M9.5 11.4L13 14.6" stroke="#8890a0" stroke-width="1.6"/><circle cx="14.6" cy="14.2" r="2.4" fill="#78c048"/><circle cx="15.6" cy="13" r="1.1" fill="#f0e070"/><path d="M12.4 16.2L16.8 12" stroke="#c8ccd4" stroke-width=".8"/></svg>
<div style="left:1741px;top:1061px;font-size:11px;letter-spacing:-.2px;transform:scaleY(1.08)">DE</div>
<div style="left:1760px;top:1056px;width:2px;height:22px;box-shadow:inset 1px 0 #808080,inset -1px 0 #fff"></div>
<div style="left:1764px;top:1056px;width:1156px;height:22px;box-shadow:inset 1px 1px #808080,inset -1px -1px #fff"></div>
<svg style="left:1770px;top:1061px" width="8" height="9" viewBox="0 0 8 9"><path d="M1 4L4 1L7 4M1 8L4 5L7 8" stroke="#000" stroke-width="1.4" fill="none"/></svg>
<svg style="left:1786px;top:1059px" width="18" height="17" viewBox="0 0 18 17"><path d="M2.5 .5V16.5" stroke="#787878" stroke-width="1.8"/><path d="M3.5 2.2H11.2L10 5.4L15.2 4.4L12.2 9.6H3.5Z" fill="#fff" stroke="#707070" stroke-width="1.1"/></svg>
<svg style="left:1810px;top:1058px" width="18" height="18" viewBox="0 0 18 18"><rect x="5" y="3.5" width="11.5" height="10" fill="#a8a8a8" stroke="#606060" stroke-width="1.1"/><path d="M6.5 5H15V9L6.5 12Z" fill="#8c8c8c"/><rect x="7" y="13.5" width="8" height="3" fill="#e4e4e4" stroke="#787878"/><rect x="1.5" y="1.5" width="4.5" height="8.5" fill="#dcdcdc" stroke="#686868"/><path d="M3.8 3V8" stroke="#909090"/><path d="M3.8 10V14H7" stroke="#707070" fill="none"/></svg>
<svg style="left:1833px;top:1058px" width="20" height="18" viewBox="0 0 20 18"><path d="M2 6.6H5L9.2 2.6V15.4L5 11.4H2Z" fill="#f4f4f4" stroke="#787878" stroke-width="1.1"/><path d="M11.6 5.8Q14 9 11.6 12.2M14.2 3.6Q18.2 9 14.2 14.4" stroke="#888" fill="none" stroke-width="1.4"/></svg>
<div style="left:1865px;top:1061.5px;font-size:11px;letter-spacing:.25px">20:22</div>
<svg style="left:1900px;top:1060px" width="15" height="14" viewBox="0 0 15 14"><rect x="0" y="1" width="15" height="12" fill="#2c6cd8"/><path d="M0 8L15 4V11H0Z" fill="#1c50b8"/><rect x="0" y="11" width="15" height="2" fill="#0c3078"/><rect x="1" y="11.3" width="7" height="1.2" fill="#a0c8f0"/></svg>
<svg style="left:1810.7px;top:900.7px" width="16" height="24" viewBox="0 0 16 24"><path d="M1.5 1.5V17.5L5.5 13.5L9 21.5L11.5 20.5L8 12.5H13.5Z" fill="#fff" stroke="#000" stroke-width="1.3"/></svg>
</div>
</body></html>
